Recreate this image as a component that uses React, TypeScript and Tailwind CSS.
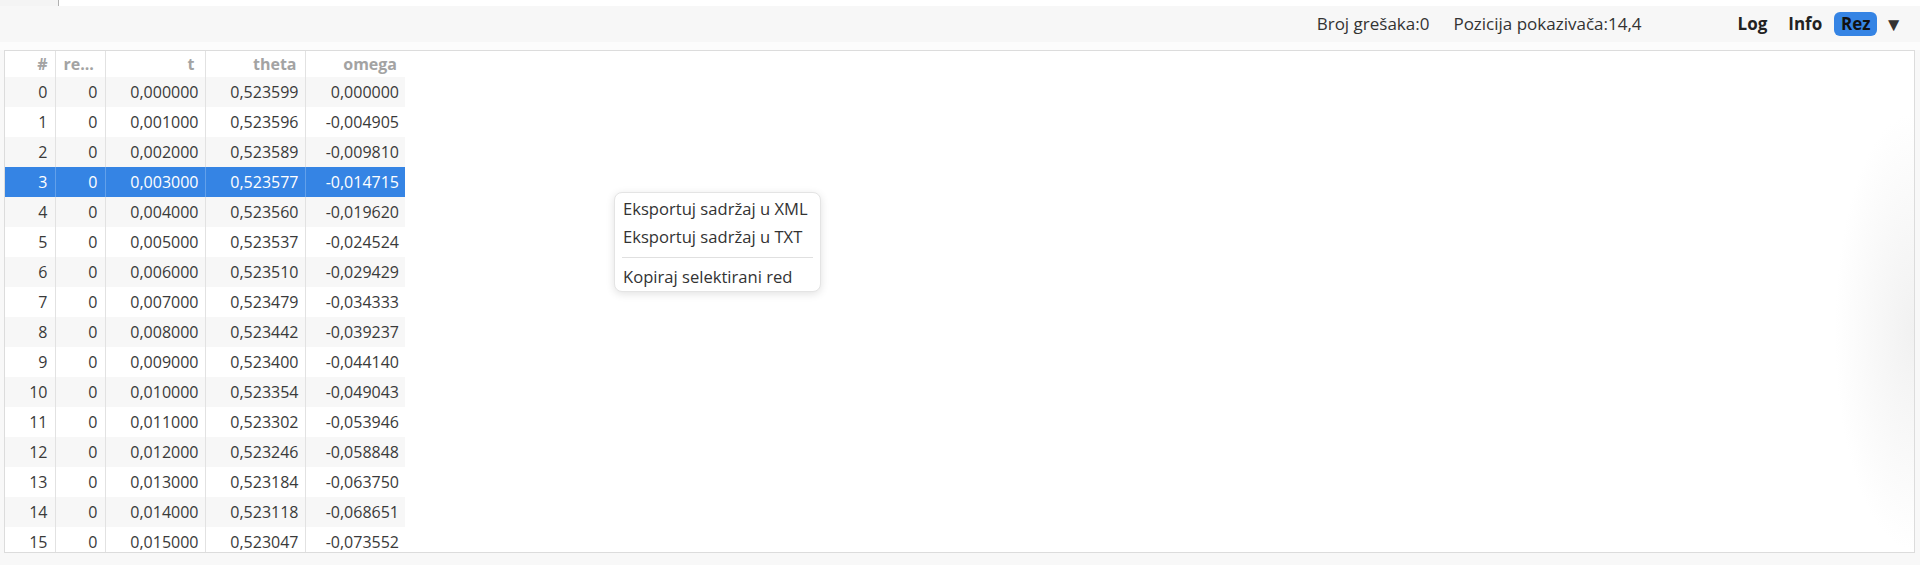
import React from "react";

type Row = { t: string; theta: string; omega: string };

const rows: Row[] = [
  { t: "0,000000", theta: "0,523599", omega: "0,000000" },
  { t: "0,001000", theta: "0,523596", omega: "-0,004905" },
  { t: "0,002000", theta: "0,523589", omega: "-0,009810" },
  { t: "0,003000", theta: "0,523577", omega: "-0,014715" },
  { t: "0,004000", theta: "0,523560", omega: "-0,019620" },
  { t: "0,005000", theta: "0,523537", omega: "-0,024524" },
  { t: "0,006000", theta: "0,523510", omega: "-0,029429" },
  { t: "0,007000", theta: "0,523479", omega: "-0,034333" },
  { t: "0,008000", theta: "0,523442", omega: "-0,039237" },
  { t: "0,009000", theta: "0,523400", omega: "-0,044140" },
  { t: "0,010000", theta: "0,523354", omega: "-0,049043" },
  { t: "0,011000", theta: "0,523302", omega: "-0,053946" },
  { t: "0,012000", theta: "0,523246", omega: "-0,058848" },
  { t: "0,013000", theta: "0,523184", omega: "-0,063750" },
  { t: "0,014000", theta: "0,523118", omega: "-0,068651" },
  { t: "0,015000", theta: "0,523047", omega: "-0,073552" },
];

const SELECTED = 3;

export default function App() {
  return (
    <div
      className="relative h-[565px] w-full overflow-hidden bg-[#f8f8f8] flex flex-col"
      style={{ fontFamily: '"Open Sans", "Noto Sans", sans-serif' }}
    >
      {/* bottom edge of the editor above */}
      <div className="h-[6px] flex shrink-0">
        <div className="w-[58px] bg-[#f4f4f4]" />
        <div className="w-px bg-[#b0b0b0]" />
        <div className="flex-1 bg-white" />
      </div>

      {/* status bar */}
      <div className="h-[36px] shrink-0 bg-[#f7f7f7] flex items-center justify-end pr-[17px] text-[17px] text-[#333] whitespace-nowrap">
        <span>Broj grešaka:0</span>
        <span className="ml-[24px]">Pozicija pokazivača:14,4</span>
        <span className="ml-[96px] font-bold text-[#222]">Log</span>
        <span className="ml-[21px] font-bold text-[#222]">Info</span>
        <span className="ml-[12px] h-[24px] w-[43px] justify-center rounded-[6px] bg-[#3584e4] font-bold text-[#111] flex items-center">
          Rez
        </span>
        <span className="ml-[7px] text-[19px] leading-none text-[#333]">▼</span>
      </div>

      <div className="h-[8px] shrink-0 bg-[#fcfcfc]" />

      {/* results table */}
      <div className="relative ml-[4px] mr-[5px] h-[503px] shrink-0 border border-[#dcdcdc] bg-white overflow-hidden">
        <div className="pointer-events-none absolute right-0 top-[60px] bottom-0 w-[80px] bg-[radial-gradient(ellipse_at_right,#f1f1f1,transparent_70%)]" />
        <table className="relative border-collapse text-[16px] leading-none">
          <thead>
            <tr className="h-[26px] font-bold text-[#a3a3a3]">
              <th className="w-[50px] pr-[7px] text-right border-r border-[#e2e2e2]">#</th>
              <th className="w-[50px] pl-[8px] text-left border-r border-[#e2e2e2]">re...</th>
              <th className="w-[100px] pr-[10px] text-right border-r border-[#e2e2e2]">t</th>
              <th className="w-[100px] pr-[8px] text-right border-r border-[#e2e2e2]">theta</th>
              <th className="w-[100px] pr-[8px] text-right">omega</th>
            </tr>
          </thead>
          <tbody>
            {rows.map((r, i) => {
              const sel = i === SELECTED;
              const rowCls = sel
                ? "bg-[#3584e4] text-white"
                : i % 2 === 0
                  ? "bg-[#f7f7f7] text-[#3a3a3a]"
                  : "bg-white text-[#3a3a3a]";
              const line = sel ? "border-r border-[#62a0ea]" : "border-r border-[#e2e2e2]";
              return (
                <tr key={i} className={`h-[30px] ${rowCls}`}>
                  <td className={`pr-[7px] text-right ${line}`}>{i}</td>
                  <td className={`pr-[7px] text-right ${line}`}>0</td>
                  <td className={`pr-[6px] text-right ${line}`}>{r.t}</td>
                  <td className={`pr-[6px] text-right ${line}`}>{r.theta}</td>
                  <td className="pr-[6px] text-right">{r.omega}</td>
                </tr>
              );
            })}
          </tbody>
        </table>
      </div>

      {/* context menu */}
      <div className="absolute left-[614px] top-[192px] w-[207px] rounded-[8px] border border-[#e4e4e4] bg-white pt-[2px] pb-[1px] shadow-[0_2px_8px_rgba(0,0,0,0.12)] text-[16.6px] text-[#333] whitespace-nowrap">
        <div className="h-[28px] px-[8px] flex items-center">Eksportuj sadržaj u XML</div>
        <div className="h-[28px] px-[8px] flex items-center">Eksportuj sadržaj u TXT</div>
        <div className="mx-[7px] mt-[6px] mb-[6px] h-px bg-[#e0e0e0]" />
        <div className="h-[26px] px-[8px] flex items-center">Kopiraj selektirani red</div>
      </div>
    </div>
  );
}
